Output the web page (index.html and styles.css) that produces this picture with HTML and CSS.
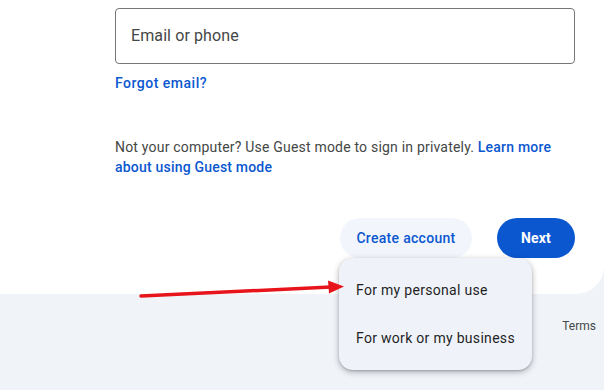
FILE: index.html
```html
<!DOCTYPE html>
<html lang="en">
<head>
  <meta charset="UTF-8">
  <title>Sign in</title>
  <link rel="stylesheet" href="styles.css">
</head>
<body>
  <div class="card">
    <div class="field">Email or phone</div>
    <a class="link forgot" href="#">Forgot email?</a>

    <p class="note">
      Not your computer? Use Guest mode to sign in privately.
      <a class="link" href="#">Learn more about using Guest mode</a>
    </p>

    <div class="actions">
      <div class="create-wrap">
        <button class="btn-create">Create account</button>
        <ul class="menu">
          <li>For my personal use</li>
          <li>For work or my business</li>
        </ul>
      </div>
      <button class="btn-next">Next</button>
    </div>
  </div>

  <div class="footer">
    <a href="#">Terms</a>
  </div>

  <!-- annotation arrow -->
  <svg class="arrow" width="604" height="390" viewBox="0 0 604 390">
    <line x1="141" y1="296" x2="331" y2="287" stroke="#e8141c" stroke-width="3.5" stroke-linecap="round"/>
    <polygon points="328,280.5 344,286.5 329,293.5" fill="#e8141c"/>
  </svg>
</body>
</html>
```

FILE: styles.css
```css
html {
  background-color: #f0f4f9;
}

body {
  margin: 0;
  min-height: 390px;
  font-family: Roboto, "Open Sans", sans-serif;
  background-color: #f0f4f9;
  color: #444746;
}

.card {
  background-color: white;
  padding: 8px 29px 36px 115px;
  border-bottom-right-radius: 28px;
}

.field {
  height: 54px;
  line-height: 54px;
  border: 1px solid #747775;
  border-radius: 4px;
  padding-left: 15px;
  font-size: 16px;
  letter-spacing: 0.1px;
  color: #444746;
}

.link {
  color: #0b57d0;
  font-weight: 500;
  text-decoration: none;
}

.forgot {
  display: inline-block;
  margin-top: 9px;
  font-size: 14px;
  line-height: 20px;
  letter-spacing: 0.5px;
}

.note {
  margin: 44px 0 0;
  font-size: 14px;
  line-height: 20px;
  letter-spacing: 0.2px;
}

.actions {
  display: flex;
  justify-content: flex-end;
  align-items: center;
  gap: 25px;
  margin-top: 41px;
}

.create-wrap {
  position: relative;
}

button {
  height: 40px;
  padding: 0;
  border: none;
  border-radius: 20px;
  font-family: inherit;
  font-size: 14px;
  font-weight: 500;
  cursor: pointer;
}

.btn-create {
  width: 132px;
  background-color: #f2f6fc;
  color: #0b57d0;
  letter-spacing: 0.3px;
}

.btn-next {
  width: 78px;
  background-color: #0b57d0;
  color: white;
  font-weight: 700;
  letter-spacing: 0.2px;
}

.menu {
  position: absolute;
  top: 100%;
  left: -1px;
  width: 193px;
  margin: 0;
  padding: 8px 0;
  list-style: none;
  background-color: #eff3f9;
  border-radius: 14px;
  box-shadow: 0 2px 6px rgba(0, 0, 0, 0.3), 0 1px 2px rgba(0, 0, 0, 0.15);
  z-index: 2;
}

.menu li {
  height: 48px;
  line-height: 48px;
  padding-left: 17px;
  font-size: 14px;
  color: #1f1f1f;
  letter-spacing: 0.3px;
}

.footer {
  display: flex;
  justify-content: flex-end;
  padding: 24px 8px 0 0;
  font-size: 12px;
  line-height: 16px;
}

.footer a {
  color: #444746;
  text-decoration: none;
}

.arrow {
  position: absolute;
  top: 0;
  left: 0;
  z-index: 3;
  pointer-events: none;
}
```
